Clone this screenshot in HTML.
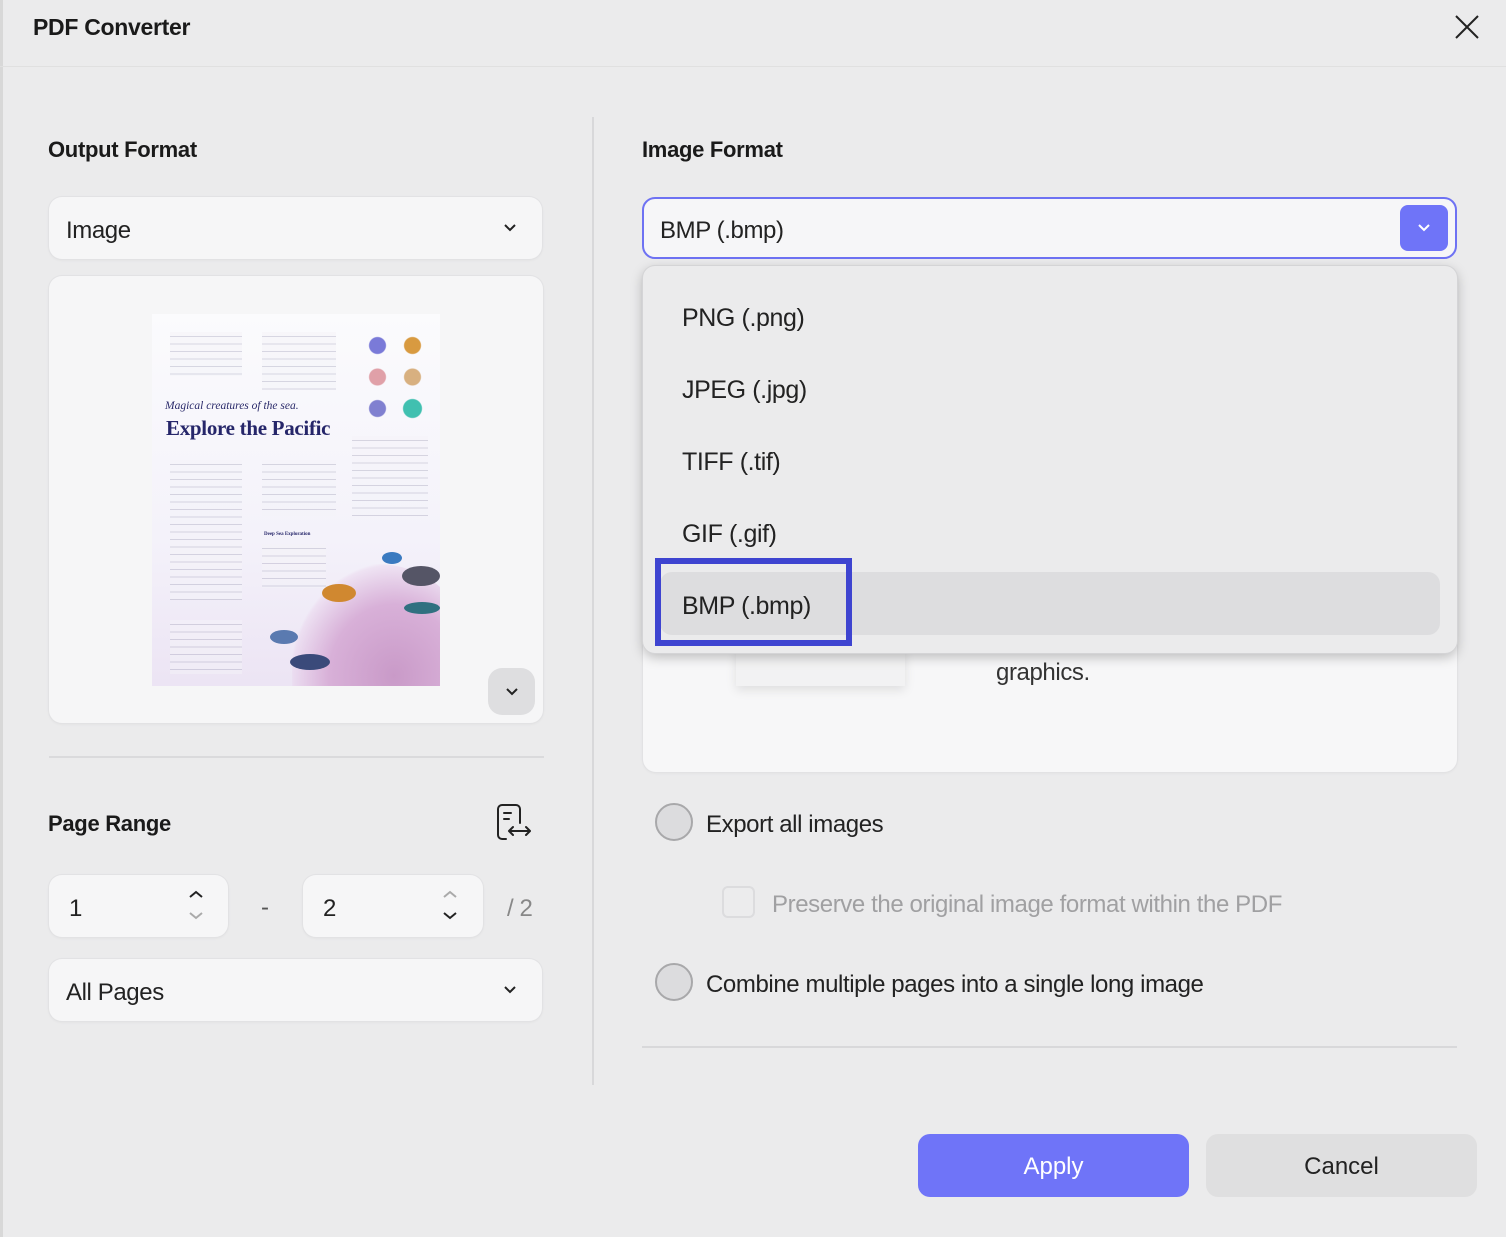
<!DOCTYPE html>
<html><head><meta charset="utf-8"><style>
*{box-sizing:border-box;margin:0;padding:0}
body{width:1506px;height:1237px;background:#ebebec;font-family:"Liberation Sans",sans-serif;color:#1c1c1c;position:relative;overflow:hidden}
.a{position:absolute}
.h{font-weight:bold;font-size:22px;color:#1a1a1a;letter-spacing:-0.3px}
.box{background:#f6f6f7;border-radius:13px;box-shadow:0 0 0 1px #e2e2e4,0 1px 3px rgba(0,0,0,.06)}
.t{font-size:24px;color:#222;letter-spacing:-0.4px}
.it{position:absolute;left:682px;font-size:25px;color:#222;letter-spacing:-0.4px}
.lines{background:repeating-linear-gradient(#f4f3f8 0 4px,#b4b2c6 4px 5px,#f4f3f8 5px 7.5px);opacity:.5}
</style></head><body>
<div class="a" style="left:0;top:0;width:3px;height:1237px;background:#d8d8d8"></div>
<div class="a h" style="left:33px;top:14px;font-size:23px">PDF Converter</div>
<svg class="a" style="left:1454px;top:14px" width="26" height="26"><path d="M2 2L24 24M24 2L2 24" stroke="#222" stroke-width="2"/></svg>
<div class="a" style="left:0;top:66px;width:1506px;height:1px;background:#e0e0e0"></div>

<div class="a h" style="left:48px;top:137px">Output Format</div>
<div class="a box" style="left:49px;top:197px;width:493px;height:62px"></div>
<div class="a t" style="left:66px;top:217px">Image</div>
<svg class="a" style="left:502px;top:222px" width="16" height="12"><path d="M3 3l5 5 5-5" stroke="#222" stroke-width="2" fill="none"/></svg>

<div class="a box" style="left:49px;top:276px;width:494px;height:447px"></div>
<div class="a" style="left:152px;top:314px;width:288px;height:372px;background:linear-gradient(#fbfbfd 0%,#f4f2fa 60%,#ece4f4 100%);overflow:hidden">
 <div class="a lines" style="left:18px;top:18px;width:72px;height:44px"></div>
 <div class="a lines" style="left:110px;top:18px;width:74px;height:58px"></div>
 <div class="a" style="left:208px;top:18px;width:70px;height:90px;background:radial-gradient(circle at 25% 15%,#7a7ad8 0 8px,transparent 9px),radial-gradient(circle at 75% 15%,#d89a40 0 8px,transparent 9px),radial-gradient(circle at 25% 50%,#e0a0a8 0 8px,transparent 9px),radial-gradient(circle at 75% 50%,#d8b080 0 8px,transparent 9px),radial-gradient(circle at 25% 85%,#8080d0 0 8px,transparent 9px),radial-gradient(circle at 75% 85%,#40c0b0 0 9px,transparent 10px)"></div>
 <div class="a" style="left:13px;top:86px;font-family:'Liberation Serif',serif;font-style:italic;font-size:11.5px;color:#2a2a6a">Magical creatures of the sea.</div>
 <div class="a" style="left:14px;top:102px;font-family:'Liberation Serif',serif;font-weight:bold;font-size:21px;color:#26266a;letter-spacing:-0.3px">Explore the Pacific</div>
 <div class="a lines" style="left:18px;top:146px;width:72px;height:140px"></div>
 <div class="a lines" style="left:110px;top:146px;width:74px;height:56px"></div>
 <div class="a lines" style="left:200px;top:122px;width:76px;height:80px"></div>
 <div class="a" style="left:112px;top:218px;font-family:'Liberation Serif',serif;font-weight:bold;font-size:5px;color:#26266a">Deep Sea Exploration</div>
 <div class="a lines" style="left:110px;top:230px;width:64px;height:44px"></div>
 <div class="a lines" style="left:18px;top:306px;width:72px;height:54px"></div>
 <div class="a" style="left:140px;top:250px;width:170px;height:140px;border-radius:50% 50% 0 0;background:radial-gradient(ellipse at 60% 80%,#c99ac8 0,#d8b0d8 45%,rgba(230,200,230,.3) 70%,transparent 72%)"></div>
 <div class="a" style="left:230px;top:238px;width:20px;height:12px;border-radius:50%;background:#3a7ac0"></div>
 <div class="a" style="left:250px;top:252px;width:38px;height:20px;border-radius:50%;background:#556"></div>
 <div class="a" style="left:170px;top:270px;width:34px;height:18px;border-radius:50%;background:#d08830"></div>
 <div class="a" style="left:252px;top:288px;width:36px;height:12px;border-radius:50%;background:#307080"></div>
 <div class="a" style="left:138px;top:340px;width:40px;height:16px;border-radius:50%;background:#3a4a7a"></div>
 <div class="a" style="left:118px;top:316px;width:28px;height:14px;border-radius:50%;background:#5a7ab0"></div>
</div>
<div class="a" style="left:488px;top:668px;width:47px;height:47px;border-radius:14px;background:#dedee0"></div>
<svg class="a" style="left:504px;top:686px" width="16" height="12"><path d="M3 3l5 5 5-5" stroke="#222" stroke-width="2" fill="none"/></svg>

<div class="a" style="left:49px;top:756px;width:495px;height:2px;background:#dadadc"></div>
<div class="a h" style="left:48px;top:811px">Page Range</div>
<svg class="a" style="left:494px;top:802px" width="40" height="40" fill="none" stroke="#222" stroke-width="2" stroke-linecap="round" stroke-linejoin="round"><path d="M12 37H8a4 4 0 0 1-4-4V7a4 4 0 0 1 4-4h14a4 4 0 0 1 4 4v14"/><path d="M10 11h7M10 17h5"/><path d="M16 29h19M19 25l-4 4 4 4M32 25l4 4-4 4"/></svg>

<div class="a box" style="left:49px;top:875px;width:179px;height:62px"></div>
<div class="a t" style="left:69px;top:895px">1</div>
<svg class="a" style="left:187px;top:887px" width="18" height="38" fill="none" stroke-width="2"><path d="M3 10l6-5 6 5" stroke="#222"/><path d="M3 26l6 5 6-5" stroke="#aaa"/></svg>
<div class="a t" style="left:261px;top:894px;color:#555">-</div>
<div class="a box" style="left:303px;top:875px;width:180px;height:62px"></div>
<div class="a t" style="left:323px;top:895px">2</div>
<svg class="a" style="left:441px;top:887px" width="18" height="38" fill="none" stroke-width="2"><path d="M3 10l6-5 6 5" stroke="#aaa"/><path d="M3 26l6 5 6-5" stroke="#222"/></svg>
<div class="a t" style="left:507px;top:895px;color:#888">/ 2</div>

<div class="a box" style="left:49px;top:959px;width:493px;height:62px"></div>
<div class="a t" style="left:66px;top:979px">All Pages</div>
<svg class="a" style="left:502px;top:984px" width="16" height="12"><path d="M3 3l5 5 5-5" stroke="#222" stroke-width="2" fill="none"/></svg>

<div class="a" style="left:592px;top:117px;width:2px;height:968px;background:#d8d8da"></div>

<div class="a h" style="left:642px;top:137px">Image Format</div>
<div class="a box" style="left:643px;top:266px;width:814px;height:506px;background:#f7f7f8"></div>
<div class="a" style="left:736px;top:648px;width:169px;height:38px;background:#f2f2f3;box-shadow:0 4px 10px rgba(0,0,0,.1)"></div>
<div class="a t" style="left:996px;top:659px;color:#333">graphics.</div>
<div class="a" style="left:642px;top:197px;width:815px;height:62px;border:2px solid #6e72f3;border-radius:13px;background:#f6f6f8"></div>
<div class="a t" style="left:660px;top:217px">BMP (.bmp)</div>
<div class="a" style="left:1400px;top:205px;width:48px;height:46px;border-radius:8px;background:#6f74f8"></div>
<svg class="a" style="left:1416px;top:222px" width="16" height="12"><path d="M3 3l5 5 5-5" stroke="#fff" stroke-width="2" fill="none"/></svg>

<div class="a" style="left:643px;top:266px;width:814px;height:387px;background:#ebebec;border-radius:12px;box-shadow:0 0 0 1px #d4d4d6,0 4px 12px rgba(0,0,0,.25)"></div>
<div class="a" style="left:660px;top:572px;width:780px;height:63px;background:#dddddf;border-radius:12px"></div>
<div class="it" style="top:304px">PNG (.png)</div>
<div class="it" style="top:376px">JPEG (.jpg)</div>
<div class="it" style="top:448px">TIFF (.tif)</div>
<div class="it" style="top:520px">GIF (.gif)</div>
<div class="it" style="top:592px">BMP (.bmp)</div>
<div class="a" style="left:655px;top:558px;width:197px;height:88px;border:6px solid #3e44d0"></div>

<div class="a" style="left:655px;top:803px;width:38px;height:38px;border-radius:50%;background:#dcdcde;border:2px solid #a8a8aa"></div>
<div class="a t" style="left:706px;top:811px">Export all images</div>
<div class="a" style="left:722px;top:886px;width:33px;height:32px;border-radius:6px;border:2px solid #dcdcde;background:#ececed"></div>
<div class="a t" style="left:772px;top:891px;color:#a0a0a2">Preserve the original image format within the PDF</div>
<div class="a" style="left:655px;top:963px;width:38px;height:38px;border-radius:50%;background:#dcdcde;border:2px solid #a8a8aa"></div>
<div class="a t" style="left:706px;top:971px">Combine multiple pages into a single long image</div>
<div class="a" style="left:642px;top:1046px;width:815px;height:2px;background:#d8d8da"></div>

<div class="a" style="left:918px;top:1134px;width:271px;height:63px;border-radius:12px;background:#6f74f8;color:#fff;font-size:24px;text-align:center;line-height:66px">Apply</div>
<div class="a" style="left:1206px;top:1134px;width:271px;height:63px;border-radius:12px;background:#dfdfe0;color:#222;font-size:24px;text-align:center;line-height:66px">Cancel</div>
</body></html>
